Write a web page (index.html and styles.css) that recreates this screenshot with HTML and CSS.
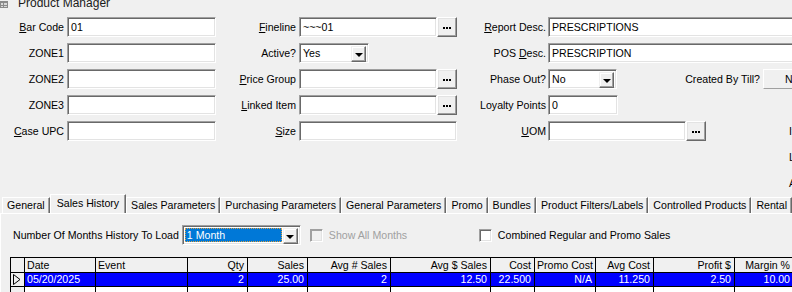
FILE: index.html
```html
<!DOCTYPE html>
<html>
<head>
<meta charset="utf-8">
<link rel="stylesheet" href="styles.css">
</head>
<body>
<div class="title">
  <svg class="ticon" width="8" height="9" viewBox="0 0 8 9"><rect x="0" y="1" width="8" height="7" fill="#8a8a8a"/><rect x="1" y="3" width="2" height="2" fill="#d8d8d8"/><rect x="4" y="3" width="3" height="2" fill="#d8d8d8"/><rect x="1" y="6" width="2" height="1" fill="#d8d8d8"/><rect x="4" y="6" width="3" height="1" fill="#d8d8d8"/></svg>
  <span class="ttext">Product Manager</span>
</div>

<div class="form">
  <!-- row 1 -->
  <label class="lbl"><u>B</u>ar Code</label>
  <div class="in">01</div>
  <label class="lbl"><u>F</u>ineline</label>
  <div class="in">~~~01</div>
  <div class="dots"><b></b><b></b><b></b></div>
  <label class="lbl r"><u>R</u>eport Desc.</label>
  <div class="in span2">PRESCRIPTIONS</div>

  <!-- row 2 -->
  <label class="lbl">ZONE1</label>
  <div class="in"></div>
  <label class="lbl">Active?</label>
  <div class="cell2"><div class="sel w70"><span class="selv">Yes</span><span class="dd"><i></i></span></div></div>
  <label class="lbl r">POS <u>D</u>esc.</label>
  <div class="in span2">PRESCRIPTION</div>

  <!-- row 3 -->
  <label class="lbl">ZONE2</label>
  <div class="in"></div>
  <label class="lbl"><u>P</u>rice Group</label>
  <div class="in"></div>
  <div class="dots"><b></b><b></b><b></b></div>
  <label class="lbl r">Phase Out?</label>
  <div class="rowflex span2">
    <div class="sel w69"><span class="selv">No</span><span class="dd"><i></i></span></div>
    <span class="lbl till">Created By Till?</span>
    <div class="flat">No</div>
  </div>

  <!-- row 4 -->
  <label class="lbl">ZONE3</label>
  <div class="in"></div>
  <label class="lbl"><u>L</u>inked Item</label>
  <div class="in"></div>
  <div class="dots"><b></b><b></b><b></b></div>
  <label class="lbl r">Loyalty Points</label>
  <div class="rowflex"><div class="in w70">0</div></div>
  <div></div>

  <!-- row 5 -->
  <label class="lbl"><u>C</u>ase UPC</label>
  <div class="in"></div>
  <label class="lbl"><u>S</u>ize</label>
  <div class="in span2b"></div>
  <label class="lbl r"><u>U</u>OM</label>
  <div class="rowflex"><div class="in w138"></div><div class="dots"><b></b><b></b><b></b></div></div>
  <span class="edge">Item</span>

  <!-- row 6 -->
  <div class="empty7"></div>
  <span class="edge">Last</span>
  <!-- row 7 -->
  <div class="empty7"></div>
  <span class="edge">Auto</span>
</div>

<div class="tabs">
  <div class="tab">General</div>
  <div class="tab sel-tab">Sales History</div>
  <div class="tab">Sales Parameters</div>
  <div class="tab">Purchasing Parameters</div>
  <div class="tab">General Parameters</div>
  <div class="tab">Promo</div>
  <div class="tab">Bundles</div>
  <div class="tab">Product Filters/Labels</div>
  <div class="tab">Controlled Products</div>
  <div class="tab">Rental</div>
</div>

<div class="panel">
  <div class="opts">
    <span class="olbl">Number Of Months History To Load</span>
    <div class="sel msel"><span class="selv hl"><span class="focus">1 Month</span></span><span class="dd"><i></i></span></div>
    <div class="chkgrp g1"><span class="chk dis"></span><span class="dtext">Show All Months</span></div>
    <div class="chkgrp"><span class="chk"></span><span>Combined Regular and Promo Sales</span></div>
  </div>

  <table class="grid">
    <colgroup>
      <col class="c0"><col class="c1"><col class="c2"><col class="c3"><col class="c4"><col class="c5"><col class="c6"><col class="c7"><col class="c8"><col class="c9"><col class="c10"><col class="c11">
    </colgroup>
    <thead>
      <tr>
        <th class="ind"></th>
        <th class="l">Date</th>
        <th class="l">Event</th>
        <th>Qty</th>
        <th>Sales</th>
        <th>Avg # Sales</th>
        <th>Avg $ Sales</th>
        <th>Cost</th>
        <th>Promo Cost</th>
        <th>Avg Cost</th>
        <th>Profit $</th>
        <th>Margin %</th>
      </tr>
    </thead>
    <tbody>
      <tr class="cur">
        <td class="ind"><svg width="8" height="11" viewBox="0 0 8 11"><path d="M0.5 0.5 L7 5.5 L0.5 10.5 Z" fill="none" stroke="#000"/></svg></td>
        <td class="l">05/20/2025</td>
        <td class="l"></td>
        <td>2</td>
        <td>25.00</td>
        <td>2</td>
        <td>12.50</td>
        <td>22.500</td>
        <td>N/A</td>
        <td>11.250</td>
        <td>2.50</td>
        <td>10.00</td>
      </tr>
      <tr class="blank">
        <td class="ind"></td><td></td><td></td><td></td><td></td><td></td><td></td><td></td><td></td><td></td><td></td><td></td>
      </tr>
    </tbody>
  </table>
</div>
</body>
</html>
```

FILE: styles.css
```css
html, body {
  margin: 0;
  padding: 0;
}
body {
  width: 792px;
  height: 292px;
  overflow: hidden;
  background: #f0f0f0;
  font-family: "Liberation Sans", Arial, sans-serif;
  font-size: 10.6px;
  color: #000;
}
u { text-decoration: underline; text-underline-offset: 1px; }

.title {
  height: 10px;
  overflow: hidden;
  display: flex;
  align-items: flex-start;
}
.ticon { flex: none; }
.ttext {
  font-size: 12px;
  line-height: 14px;
  margin-top: -4px;
  margin-left: 10px;
  color: #1a1a1a;
}

.form {
  display: grid;
  grid-template-columns: 67px 149px 83px 138px 20px 91px 240px 60px;
  grid-auto-rows: 20px;
  row-gap: 6px;
  padding-top: 7px;
  width: 848px;
}
.lbl {
  align-self: center;
  text-align: right;
  padding-right: 3px;
  white-space: nowrap;
  line-height: 13px;
}
.lbl.r { padding-right: 2px; }
.in {
  box-sizing: border-box;
  height: 20px;
  background: #fff;
  border: 1px solid;
  border-color: #a0a0a0 #fff #fff #a0a0a0;
  box-shadow: inset 1px 1px 0 #696969, inset -1px -1px 0 #e3e3e3;
  padding: 3px 2px 0 3px;
  line-height: 13px;
  white-space: pre;
  overflow: hidden;
}
.span2 { grid-column: span 2; }
.span2b { grid-column: span 2; }
.w70 { width: 70px; }
.w138 { width: 138px; }
.cell2 { grid-column: span 2; }

.dots {
  box-sizing: border-box;
  width: 20px;
  height: 20px;
  flex: none;
  background: #f0f0f0;
  border: 1px solid;
  border-color: #fff #696969 #696969 #fff;
  box-shadow: inset -1px -1px 0 #a0a0a0, inset 1px 1px 0 #e3e3e3;
  display: flex;
  justify-content: center;
  align-items: center;
  gap: 1px;
  padding-top: 2px;
}
.dots b {
  display: block;
  width: 2px;
  height: 2px;
  background: #000;
}

.sel {
  box-sizing: border-box;
  height: 20px;
  background: #fff;
  border: 1px solid;
  border-color: #a0a0a0 #fff #fff #a0a0a0;
  box-shadow: inset 1px 1px 0 #696969, inset -1px -1px 0 #e3e3e3;
  display: flex;
  padding: 2px;
  flex: none;
}
.w70 { width: 70px; }
.w69 { width: 69px; }
.selv {
  flex: 1;
  padding: 1px 0 0 1px;
  line-height: 13px;
}
.dd {
  box-sizing: border-box;
  width: 15px;
  height: 16px;
  flex: none;
  background: #f0f0f0;
  border: 1px solid;
  border-color: #f0f0f0 #696969 #696969 #f0f0f0;
  box-shadow: inset -1px -1px 0 #a0a0a0, inset 1px 1px 0 #fff;
  display: flex;
  align-items: center;
  justify-content: center;
}
.dd i {
  display: block;
  width: 0;
  height: 0;
  border-left: 4px solid transparent;
  border-right: 4px solid transparent;
  border-top: 4px solid #000;
  margin-top: 1px;
}

.rowflex {
  display: flex;
  align-items: center;
}
.till {
  flex: 1 1 auto;
  padding-right: 3px;
}
.flat {
  box-sizing: border-box;
  flex: none;
  width: 85px;
  height: 20px;
  background: #f0f0f0;
  border-top: 1px solid #fff;
  border-left: 1px solid #fff;
  border-bottom: 1px solid #a0a0a0;
  padding: 3px 0 0 21px;
  line-height: 13px;
}
.empty7 { grid-column: span 7; }
.edge {
  align-self: center;
  line-height: 13px;
  white-space: nowrap;
  padding-left: 1px;
}

.tabs {
  display: flex;
  align-items: flex-end;
  height: 20px;
  padding-left: 2px;
}
.tab {
  box-sizing: border-box;
  height: 16px;
  padding: 0 4px 0 4px;
  border-top: 1px solid #fff;
  border-left: 1px solid #fff;
  border-right: 1px solid #696969;
  box-shadow: inset -1px 0 0 #a0a0a0;
  line-height: 15px;
  white-space: nowrap;
}
.tab.sel-tab {
  height: 19px;
  line-height: 14px;
  padding: 1px 6px 0 6px;
}

.panel {
  border-top: 1px solid #fff;
  border-left: 1px solid #fff;
  padding: 11px 0 0 12px;
}
.opts {
  display: flex;
  align-items: center;
  height: 20px;
}
.olbl { margin-right: 3px; white-space: nowrap; }
.msel { width: 119px; }
.selv.hl {
  background: #0078d7;
  color: #fff;
  margin-right: 1px;
  padding: 0;
}
.focus {
  display: block;
  height: 14px;
  box-sizing: border-box;
  border: 1px dotted #e0a040;
  padding-left: 1px;
  line-height: 12px;
}
.chkgrp {
  display: flex;
  align-items: center;
  white-space: nowrap;
}
.g1 {
  width: 169px;
  margin-left: 9px;
}
.chk {
  box-sizing: border-box;
  width: 13px;
  height: 13px;
  background: #fff;
  border: 1px solid;
  border-color: #a0a0a0 #fff #fff #a0a0a0;
  box-shadow: inset 1px 1px 0 #696969, inset -1px -1px 0 #e3e3e3;
  margin-right: 6px;
  flex: none;
}
.chk.dis {
  background: #f0f0f0;
  box-shadow: inset 1px 1px 0 #a0a0a0, inset -1px -1px 0 #e3e3e3;
}
.dtext { color: #a0a0a0; }

.grid {
  margin-top: 12px;
  margin-left: -3px;
  border-collapse: collapse;
  table-layout: fixed;
  width: 783px;
  border-top: 1px solid #000;
  border-left: 1px solid #000;
}
.c0 { width: 14px; }
.c1 { width: 71px; }
.c2 { width: 92px; }
.c3 { width: 60px; }
.c4 { width: 60px; }
.c5 { width: 83px; }
.c6 { width: 100px; }
.c7 { width: 44px; }
.c8 { width: 61px; }
.c9 { width: 58px; }
.c10 { width: 81px; }
.c11 { width: 59px; }
.grid th, .grid td {
  border: 1px solid #000;
  padding: 0 3px 0 2px;
  height: 13px;
  line-height: 13px;
  font-weight: normal;
  text-align: right;
  white-space: nowrap;
  overflow: hidden;
}
.grid th { height: 14px; background: #f0f0f0; }
.grid .l { text-align: left; }
.grid .ind { background: #f0f0f0; padding: 0 0 0 2px; text-align: left; }
.grid .ind svg { display: block; }
.cur td { background: #0000ff; color: #fff; }
.cur td.ind { background: #f0f0f0; }
.blank td { background: #fff; height: 13px; }
.blank td.ind { background: #f0f0f0; }
```
